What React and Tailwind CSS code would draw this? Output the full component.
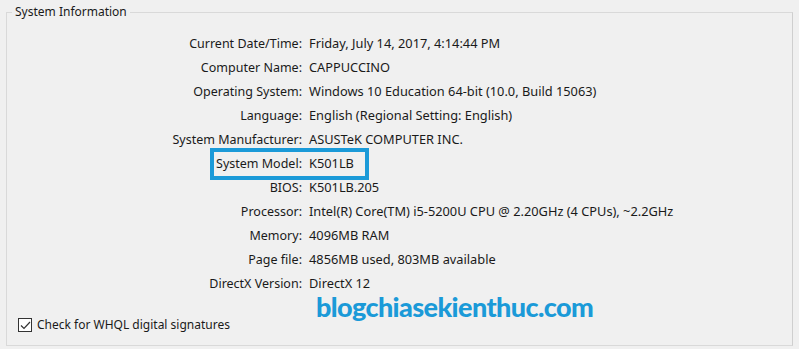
const rows = [
  ['Current Date/Time:', 'Friday, July 14, 2017, 4:14:44 PM'],
  ['Computer Name:', 'CAPPUCCINO'],
  ['Operating System:', 'Windows 10 Education 64-bit (10.0, Build 15063)'],
  ['Language:', 'English (Regional Setting: English)'],
  ['System Manufacturer:', 'ASUSTeK COMPUTER INC.'],
  ['System Model:', 'K501LB', true],
  ['BIOS:', 'K501LB.205'],
  ['Processor:', 'Intel(R) Core(TM) i5-5200U CPU @ 2.20GHz (4 CPUs), ~2.2GHz'],
  ['Memory:', '4096MB RAM'],
  ['Page file:', '4856MB used, 803MB available'],
  ['DirectX Version:', 'DirectX 12'],
];

export default function App() {
  return (
    <div className="w-[799px] h-[349px] bg-[#f0f0f0] overflow-hidden pt-3 pl-[6px] pr-[6px] text-[#1a1a1a]" style={{ fontFamily: '"Noto Sans", sans-serif' }}>
      <div className="relative h-[334px] border border-[#d9d9d9] border-r-[#cfcfcf]">
        <span className="absolute -top-[10px] left-[5px] bg-[#f0f0f0] px-[3px] leading-[18px] text-[12px]">System Information</span>

        <div className="flex flex-col pt-[18px]">
          {rows.map(([label, value, hl]) => (
            <div key={label} className="relative flex h-[24px] items-center">
              <span className="w-[295px] shrink-0 text-right text-[12.5px] leading-[15px]">{label}</span>
              <span className="pl-[7px] whitespace-nowrap text-[12.8px] leading-[15px]">{value}</span>
              {hl && <div className="absolute left-[203px] top-[-3px] w-[159px] h-[32px] border-4 border-[#1b9ad8]" />}
            </div>
          ))}
        </div>

        <label className="flex items-center gap-[5px] pl-[11px] pt-[21px] text-[12px]">
          <span className="flex w-[14px] h-[14px] items-center justify-center border border-[#333] bg-white">
            <svg width="11" height="9" viewBox="0 0 11 9" fill="none">
              <path d="M1 4.5 L4 7.5 L10 1" stroke="#333" strokeWidth="1.2" />
            </svg>
          </span>
          <span>Check for WHQL digital signatures</span>
        </label>

        <span className="absolute left-[309px] top-[284px] text-[27px] font-black tracking-[-0.6px] text-[#1b9ad8] leading-[20px]" style={{ fontFamily: '"Lato", sans-serif' }}>
          blogchiasekienthuc.com
        </span>
      </div>
    </div>
  );
}
